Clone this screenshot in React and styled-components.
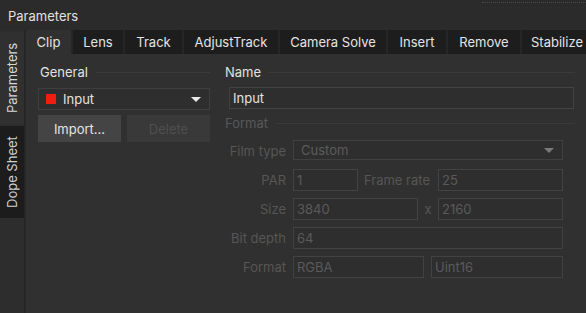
import React from 'react';
import styled, { createGlobalStyle } from 'styled-components';

const Global = createGlobalStyle`
  html, body { margin: 0; padding: 0; background: #303030; }
  body { font-family: Inter, "Noto Sans", sans-serif; font-size: 13px; }
`;

const Root = styled.div`
  width: 586px;
  height: 313px;
  display: flex;
  flex-direction: column;
  background: #303030;
  color: #e2e2e2;
  overflow: hidden;
`;

const Header = styled.div`
  height: 30px;
  flex: none;
  display: flex;
  align-items: center;
  padding: 2px 0 0 8px;
  box-sizing: border-box;
  background: #2b2b2b;
  position: relative;
  &::after {
    content: '';
    position: absolute;
    top: 2px;
    left: 482px;
    right: 0;
    border-top: 1px dotted #4a4a4a;
  }
`;

const Body = styled.div`
  flex: 1;
  display: flex;
  min-height: 0;
`;

const SideBar = styled.div`
  width: 24px;
  flex: none;
  display: flex;
  flex-direction: column;
  gap: 2px;
  padding-top: 2px;
  background: #2d2d2d;
  border-right: 2px solid #262626;
`;

const SideTab = styled.div`
  height: 92px;
  display: flex;
  align-items: center;
  justify-content: center;
  writing-mode: vertical-rl;
  transform: rotate(180deg);
  font-size: 13px;
  color: ${p => (p.active ? '#d8d8d8' : '#d0d0d0')};
  background: ${p => (p.active ? '#303030' : '#1c1c1c')};
`;

const Main = styled.div`
  flex: 1;
  display: flex;
  flex-direction: column;
  min-width: 0;
`;

const TabBar = styled.div`
  height: 24px;
  flex: none;
  display: flex;
  gap: 2px;
  background: #262626;
`;

const Tab = styled.div`
  flex: none;
  width: ${p => p.w}px;
  display: flex;
  align-items: center;
  justify-content: center;
  font-size: 13px;
  white-space: nowrap;
  color: #e4e4e4;
  background: ${p => (p.active ? '#303030' : '#1d1d1d')};
`;

const Content = styled.div`
  flex: 1;
  display: grid;
  grid-template-columns: 172px 1fr;
  column-gap: 13px;
  padding: 9px 11px 0 12px;
  align-items: start;
`;

const Column = styled.div`
  display: flex;
  flex-direction: column;
`;

const GroupHead = styled.div`
  display: flex;
  align-items: center;
  gap: 8px;
  height: 18px;
  padding-left: 2px;
  color: ${p => (p.disabled ? '#585858' : '#e2e2e2')};
  margin-top: ${p => p.mt || 0}px;
  &::after {
    content: '';
    flex: 1;
    height: 1px;
    background: #3b3b3b;
  }
`;

const Select = styled.div`
  height: ${p => p.h || 22}px;
  box-sizing: border-box;
  display: flex;
  align-items: center;
  gap: 7px;
  padding: 0 8px 0 7px;
  border: 1px solid ${p => (p.disabled ? '#404040' : '#3f3f3f')};
  background: #2e2e2e;
  color: ${p => (p.disabled ? '#5c5c5c' : '#e2e2e2')};
  margin-top: ${p => p.mt || 0}px;
`;

const Swatch = styled.span`
  width: 10px;
  height: 10px;
  background: #f01d10;
  flex: none;
`;

const Grow = styled.span`
  flex: 1;
`;

const Arrow = styled.span`
  width: 0;
  height: 0;
  border-left: 5px solid transparent;
  border-right: 5px solid transparent;
  border-top: 5px solid ${p => (p.disabled ? '#7a7a7a' : '#e8e8e8')};
`;

const ButtonRow = styled.div`
  display: grid;
  grid-template-columns: 83px 83px;
  justify-content: space-between;
  margin-top: 5px;
`;

const Button = styled.div`
  height: 27px;
  display: flex;
  align-items: center;
  justify-content: center;
  background: ${p => (p.disabled ? '#393939' : '#444444')};
  color: ${p => (p.disabled ? '#4f4f4f' : '#e4e4e4')};
`;

const Field = styled.div`
  height: 22px;
  box-sizing: border-box;
  display: flex;
  align-items: center;
  padding-left: 3px;
  border: 1px solid #424242;
  background: #2e2e2e;
  color: ${p => (p.disabled ? '#5a5a5a' : '#e2e2e2')};
`;

const NameField = styled(Field)`
  margin: 6px 0 0 6px;
  width: 345px;
`;

const Form = styled.div`
  display: grid;
  grid-template-columns: 57px 270px;
  column-gap: 7px;
  row-gap: 7px;
  padding-left: 6px;
  margin-top: 8px;
`;

const Label = styled.div`
  height: 22px;
  display: flex;
  align-items: center;
  justify-content: flex-end;
  padding-right: ${p => p.pr || 0}px;
  white-space: nowrap;
  color: #565656;
`;

const Pair = styled.div`
  display: grid;
  grid-template-columns: ${p => p.cols};
  align-items: center;
`;

const Sep = styled.div`
  display: flex;
  justify-content: center;
  color: #565656;
`;

const tabs = [
  ['Clip', 45],
  ['Lens', 50],
  ['Track', 57],
  ['AdjustTrack', 94],
  ['Camera Solve', 106],
  ['Insert', 58],
  ['Remove', 72],
  ['Stabilize', 70],
];

export default function App() {
  return (
    <Root>
      <Global />
      <Header>Parameters</Header>
      <Body>
        <SideBar>
          <SideTab active>Parameters</SideTab>
          <SideTab>Dope Sheet</SideTab>
        </SideBar>
        <Main>
          <TabBar>
            {tabs.map(([t, w], i) => (
              <Tab key={t} w={w} active={i === 0}>{t}</Tab>
            ))}
          </TabBar>
          <Content>
            <Column>
              <GroupHead>General</GroupHead>
              <Select mt={7}>
                <Swatch />
                <Grow>Input</Grow>
                <Arrow />
              </Select>
              <ButtonRow>
                <Button>Import...</Button>
                <Button disabled>Delete</Button>
              </ButtonRow>
            </Column>
            <Column>
              <GroupHead>Name</GroupHead>
              <NameField>Input</NameField>
              <GroupHead disabled mt={5}>Format</GroupHead>
              <Form>
                <Label>Film type</Label>
                <Select disabled h={20}>
                  <Grow>Custom</Grow>
                  <Arrow disabled />
                </Select>
                <Label>PAR</Label>
                <Pair cols="65px 80px 125px">
                  <Field disabled>1</Field>
                  <Label pr={8}>Frame rate</Label>
                  <Field disabled>25</Field>
                </Pair>
                <Label>Size</Label>
                <Pair cols="125px 20px 125px">
                  <Field disabled>3840</Field>
                  <Sep>x</Sep>
                  <Field disabled>2160</Field>
                </Pair>
                <Label>Bit depth</Label>
                <Field disabled>64</Field>
                <Label>Format</Label>
                <Pair cols="131px 7px 132px">
                  <Field disabled>RGBA</Field>
                  <span />
                  <Field disabled>Uint16</Field>
                </Pair>
              </Form>
            </Column>
          </Content>
        </Main>
      </Body>
    </Root>
  );
}
